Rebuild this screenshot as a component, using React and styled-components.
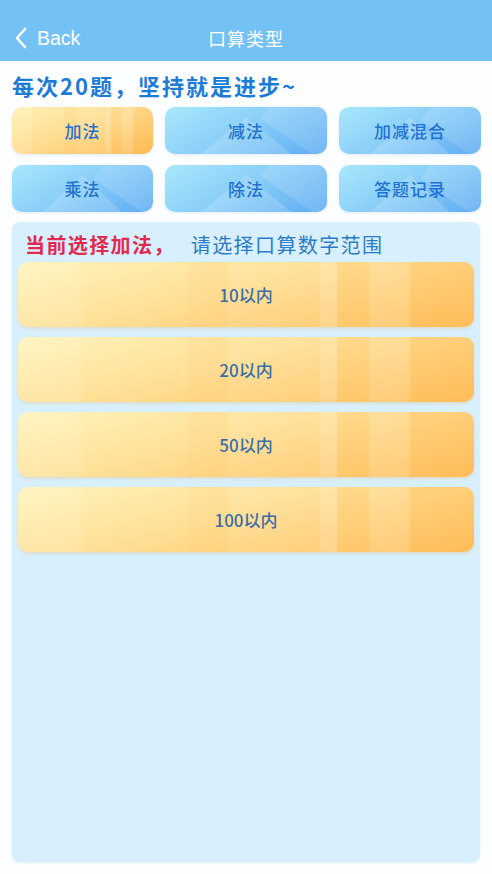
import React from 'react'
import styled, { createGlobalStyle } from 'styled-components'

const GlobalStyle = createGlobalStyle`
  html, body {
    margin: 0;
    padding: 0;
    background: #fff;
    font-family: "Noto Sans CJK SC", "Noto Sans", sans-serif;
  }
  * { box-sizing: border-box; }
`

const Page = styled.div`
  width: 492px;
  height: 874px;
  display: flex;
  flex-direction: column;
  background: #fdfeff;
`

const Header = styled.div`
  height: 61px;
  flex-shrink: 0;
  background: #74c1f5;
  display: grid;
  grid-template-columns: 100px 1fr 100px;
  align-items: end;
  padding-bottom: 11px;
  color: #fff;
`

const BackLink = styled.div`
  display: flex;
  align-items: center;
  gap: 9px;
  padding-left: 14px;
  font-family: "Liberation Sans", Arial, sans-serif;
  font-size: 19.5px;
  line-height: 24px;
`

const Title = styled.div`
  text-align: center;
  font-size: 18px;
  line-height: 24px;
  letter-spacing: 1px;
`

const Slogan = styled.div`
  padding: 9px 0 0 12px;
  height: 46px;
  font-size: 22px;
  font-weight: 700;
  color: #1d7bd8;
  letter-spacing: 2px;
  line-height: 30px;
`

const TypeGrid = styled.div`
  display: grid;
  grid-template-columns: 141px 162px 142px;
  column-gap: 12px;
  row-gap: 11px;
  padding: 0 12px;
`

const yellowBands = `linear-gradient(90deg,
  rgba(255,255,255,0.10) 0 14%,
  rgba(255,255,255,0.00) 14% 37%,
  rgba(255,200,120,0.14) 37% 46%,
  rgba(255,255,255,0.06) 46% 66%,
  rgba(255,255,255,0.18) 66% 70%,
  rgba(255,180,80,0.10) 70% 77%,
  rgba(255,255,255,0.12) 77% 86%,
  rgba(255,170,60,0.12) 86% 100%)`

const TypeButton = styled.div`
  position: relative;
  overflow: hidden;
  height: 47px;
  border-radius: 10px;
  display: flex;
  align-items: center;
  justify-content: center;
  font-size: 17px;
  font-weight: 500;
  color: #1f72d2;
  letter-spacing: 1px;
  background: ${p => p.$active
    ? `${yellowBands}, linear-gradient(160deg, #fff1b8 0%, #ffd98a 55%, #ffbb55 100%)`
    : 'linear-gradient(150deg, #a9e8fb 0%, #88cdf8 50%, #5eabf3 100%)'};
  box-shadow: 0 1px 3px rgba(80, 150, 210, 0.18);

  &::before {
    content: '';
    display: ${p => (p.$active ? 'none' : 'block')};
    position: absolute;
    left: 22%;
    right: 22%;
    top: 22%;
    bottom: 0;
    background: rgba(255, 255, 255, 0.16);
    clip-path: polygon(50% 0, 100% 100%, 0 100%);
  }

  &::after {
    content: '';
    display: ${p => (p.$active ? 'none' : 'block')};
    position: absolute;
    right: -10%;
    top: -40%;
    width: 45%;
    height: 120%;
    background: rgba(255, 255, 255, 0.13);
    transform: rotate(35deg);
  }
`

const ButtonLabel = styled.span`
  position: relative;
  z-index: 1;
`

const Panel = styled.div`
  flex: 1;
  margin: 10px 12px 12px;
  background: #d8f0fd;
  border-radius: 8px;
  padding: 6px 6px 0;
  box-shadow: 0 1px 3px rgba(120, 180, 220, 0.2);
`

const PanelTitle = styled.div`
  padding-left: 7px;
  height: 34px;
  display: flex;
  align-items: center;
  font-size: 20px;
  line-height: 26px;
  letter-spacing: 1.4px;
`

const Current = styled.span`
  color: #e2294f;
  font-weight: 700;
  margin-right: 16px;
`

const Hint = styled.span`
  color: #2c7bc6;
`

const RangeList = styled.div`
  display: flex;
  flex-direction: column;
  gap: 10px;
`

const RangeButton = styled.div`
  height: 65px;
  border-radius: 10px;
  display: flex;
  align-items: center;
  justify-content: center;
  font-size: 17px;
  font-weight: 500;
  color: #3a6ea8;
  background: ${yellowBands}, linear-gradient(165deg, #fff4bd 0%, #ffdf95 45%, #ffbf5c 100%);
  box-shadow: 0 2px 3px rgba(230, 170, 80, 0.25);
`

const Chevron = () => (
  <svg width="14" height="22" viewBox="0 0 14 22">
    <path d="M11 2 L3 11 L11 20" fill="none" stroke="#fff" strokeWidth="2.6" strokeLinecap="round" strokeLinejoin="round" />
  </svg>
)

const types = [
  { label: '加法', active: true },
  { label: '减法' },
  { label: '加减混合' },
  { label: '乘法' },
  { label: '除法' },
  { label: '答题记录' },
]

const ranges = ['10以内', '20以内', '50以内', '100以内']

const App = () => {
  return (
    <Page>
      <GlobalStyle />
      <Header>
        <BackLink>
          <Chevron />
          Back
        </BackLink>
        <Title>口算类型</Title>
        <div />
      </Header>
      <Slogan>每次20题，坚持就是进步~</Slogan>
      <TypeGrid>
        {types.map(t => (
          <TypeButton key={t.label} $active={t.active}>
            <ButtonLabel>{t.label}</ButtonLabel>
          </TypeButton>
        ))}
      </TypeGrid>
      <Panel>
        <PanelTitle>
          <Current>当前选择加法，</Current>
          <Hint>请选择口算数字范围</Hint>
        </PanelTitle>
        <RangeList>
          {ranges.map(r => (
            <RangeButton key={r}>{r}</RangeButton>
          ))}
        </RangeList>
      </Panel>
    </Page>
  )
}

export default App
